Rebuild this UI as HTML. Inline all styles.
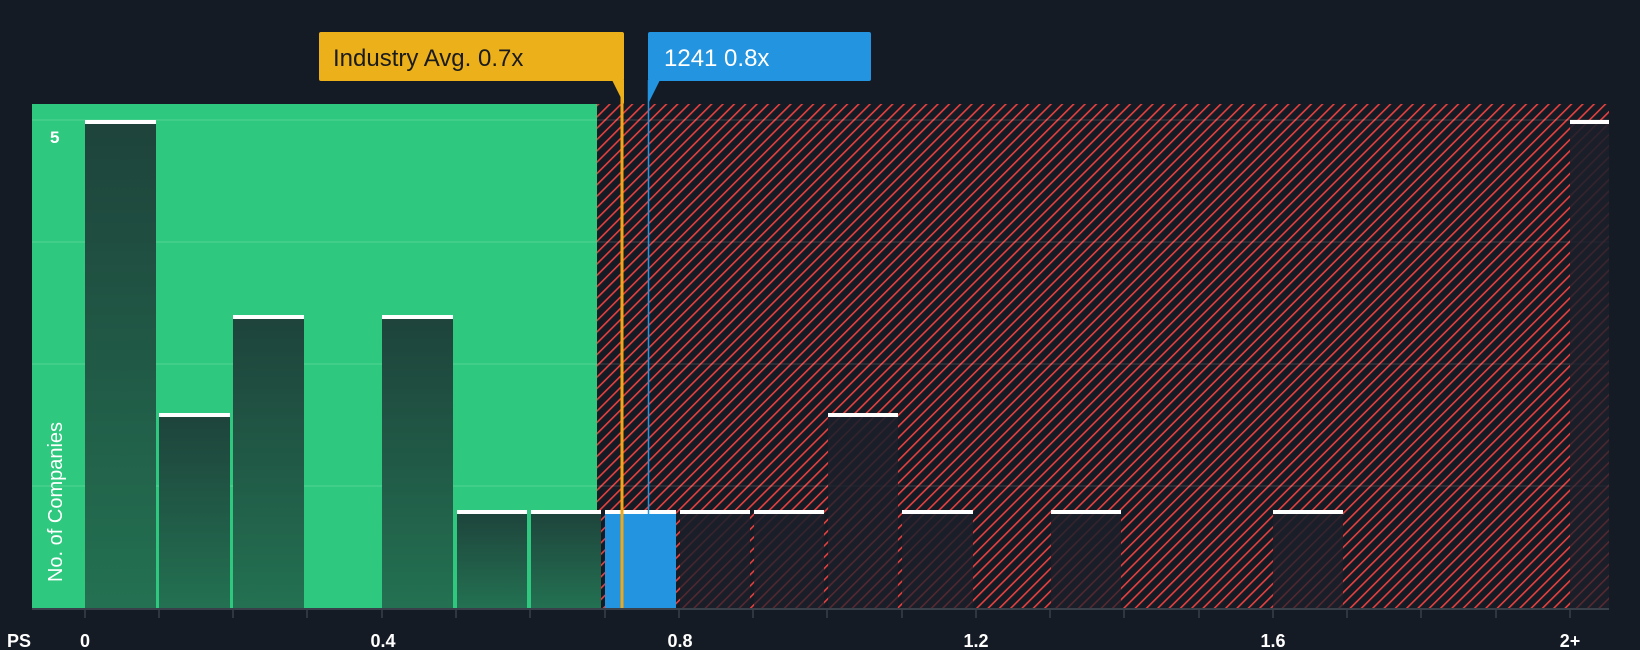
<!DOCTYPE html>
<html><head><meta charset="utf-8"><style>
html,body{margin:0;padding:0;background:#151b24;}
svg{display:block}
text{font-family:"Liberation Sans",sans-serif;}
</style></head><body>
<svg width="1640" height="650" viewBox="0 0 1640 650" xmlns="http://www.w3.org/2000/svg">
<defs>
<pattern id="h" width="8" height="8" patternUnits="userSpaceOnUse" patternTransform="rotate(45)">
<rect width="8" height="8" fill="#151b24"/>
<line x1="0" y1="0" x2="0" y2="8" stroke="#e8403f" stroke-width="3.2"/>
</pattern>
<linearGradient id="g" x1="0" y1="0" x2="0" y2="1">
<stop offset="0" stop-color="#1e433b"/><stop offset="1" stop-color="#237152"/>
</linearGradient>
<linearGradient id="r" x1="0" y1="0" x2="0" y2="1">
<stop offset="0" stop-color="#1b1f2a" stop-opacity="0.9"/><stop offset="1" stop-color="#1b1f2a" stop-opacity="0.7"/>
</linearGradient>
</defs>
<rect x="32" y="104" width="565" height="504" fill="#2ec97e"/>
<rect x="597" y="104" width="1012" height="504" fill="url(#h)"/>
<g stroke="#ffffff" stroke-opacity="0.12" stroke-width="1.5">
<line x1="32" y1="120" x2="1609" y2="120"/>
<line x1="32" y1="242" x2="1609" y2="242"/>
<line x1="32" y1="364" x2="1609" y2="364"/>
<line x1="32" y1="486" x2="1609" y2="486"/>
</g>
<g fill="url(#g)">
<rect x="85" y="121" width="71" height="487"/>
<rect x="159" y="414" width="71" height="194"/>
<rect x="233" y="316" width="71" height="292"/>
<rect x="382" y="316" width="71" height="292"/>
<rect x="457" y="511" width="70" height="97"/>
<rect x="531" y="511" width="70" height="97"/>
</g>
<rect x="605" y="511" width="71" height="97" fill="#2394e0"/>
<g fill="url(#r)">
<rect x="680" y="511" width="70" height="97"/>
<rect x="754" y="511" width="70" height="97"/>
<rect x="828" y="414" width="70" height="194"/>
<rect x="902" y="511" width="71" height="97"/>
<rect x="1051" y="511" width="70" height="97"/>
<rect x="1273" y="511" width="70" height="97"/>
<rect x="1570" y="121" width="39" height="487"/>
</g>
<g fill="#ffffff">
<rect x="85" y="120" width="71" height="4"/>
<rect x="159" y="413" width="71" height="4"/>
<rect x="233" y="315" width="71" height="4"/>
<rect x="382" y="315" width="71" height="4"/>
<rect x="457" y="510" width="70" height="4"/>
<rect x="531" y="510" width="70" height="4"/>
<rect x="605" y="510" width="71" height="4"/>
<rect x="680" y="510" width="70" height="4"/>
<rect x="754" y="510" width="70" height="4"/>
<rect x="828" y="413" width="70" height="4"/>
<rect x="902" y="510" width="71" height="4"/>
<rect x="1051" y="510" width="70" height="4"/>
<rect x="1273" y="510" width="70" height="4"/>
<rect x="1570" y="120" width="39" height="4"/>
</g>
<line x1="32" y1="609" x2="1609" y2="609" stroke="#3a404a" stroke-width="2"/>
<g stroke="#3a404a" stroke-width="1.5">
<line x1="85" y1="609" x2="85" y2="618"/><line x1="159" y1="609" x2="159" y2="618"/><line x1="233" y1="609" x2="233" y2="618"/><line x1="307" y1="609" x2="307" y2="618"/><line x1="382" y1="609" x2="382" y2="618"/><line x1="456" y1="609" x2="456" y2="618"/><line x1="530" y1="609" x2="530" y2="618"/><line x1="605" y1="609" x2="605" y2="618"/><line x1="679" y1="609" x2="679" y2="618"/><line x1="753" y1="609" x2="753" y2="618"/><line x1="827" y1="609" x2="827" y2="618"/><line x1="902" y1="609" x2="902" y2="618"/><line x1="976" y1="609" x2="976" y2="618"/><line x1="1050" y1="609" x2="1050" y2="618"/><line x1="1124" y1="609" x2="1124" y2="618"/><line x1="1199" y1="609" x2="1199" y2="618"/><line x1="1273" y1="609" x2="1273" y2="618"/><line x1="1347" y1="609" x2="1347" y2="618"/><line x1="1421" y1="609" x2="1421" y2="618"/><line x1="1496" y1="609" x2="1496" y2="618"/><line x1="1570" y1="609" x2="1570" y2="618"/>
</g>
<g fill="#ffffff" font-size="18" font-weight="bold">
<text x="7" y="647">PS</text>
<text x="85" y="647" text-anchor="middle">0</text>
<text x="383" y="647" text-anchor="middle">0.4</text>
<text x="680" y="647" text-anchor="middle">0.8</text>
<text x="976" y="647" text-anchor="middle">1.2</text>
<text x="1273" y="647" text-anchor="middle">1.6</text>
<text x="1570" y="647" text-anchor="middle">2+</text>
<text x="50" y="143" font-size="17">5</text>
<text transform="translate(62,502) rotate(-90)" text-anchor="middle" font-size="20" font-weight="normal">No. of Companies</text>
</g>
<line x1="622" y1="80" x2="622" y2="608" stroke="#f0a818" stroke-width="3"/>
<line x1="648.5" y1="80" x2="648.5" y2="608" stroke="#2394e0" stroke-width="1.5"/>
<rect x="319" y="32" width="305" height="49" rx="2" fill="#ebb01a"/>
<polygon points="612,80 624,80 624,104" fill="#ebb01a"/>
<text x="333" y="66" font-size="24" fill="#1b1b1b">Industry Avg. 0.7x</text>
<rect x="648" y="32" width="223" height="49" rx="2" fill="#2394e0"/>
<polygon points="648,80 660,80 648,104" fill="#2394e0"/>
<text x="664" y="66" font-size="24" fill="#ffffff">1241 0.8x</text>
</svg>
</body></html>
